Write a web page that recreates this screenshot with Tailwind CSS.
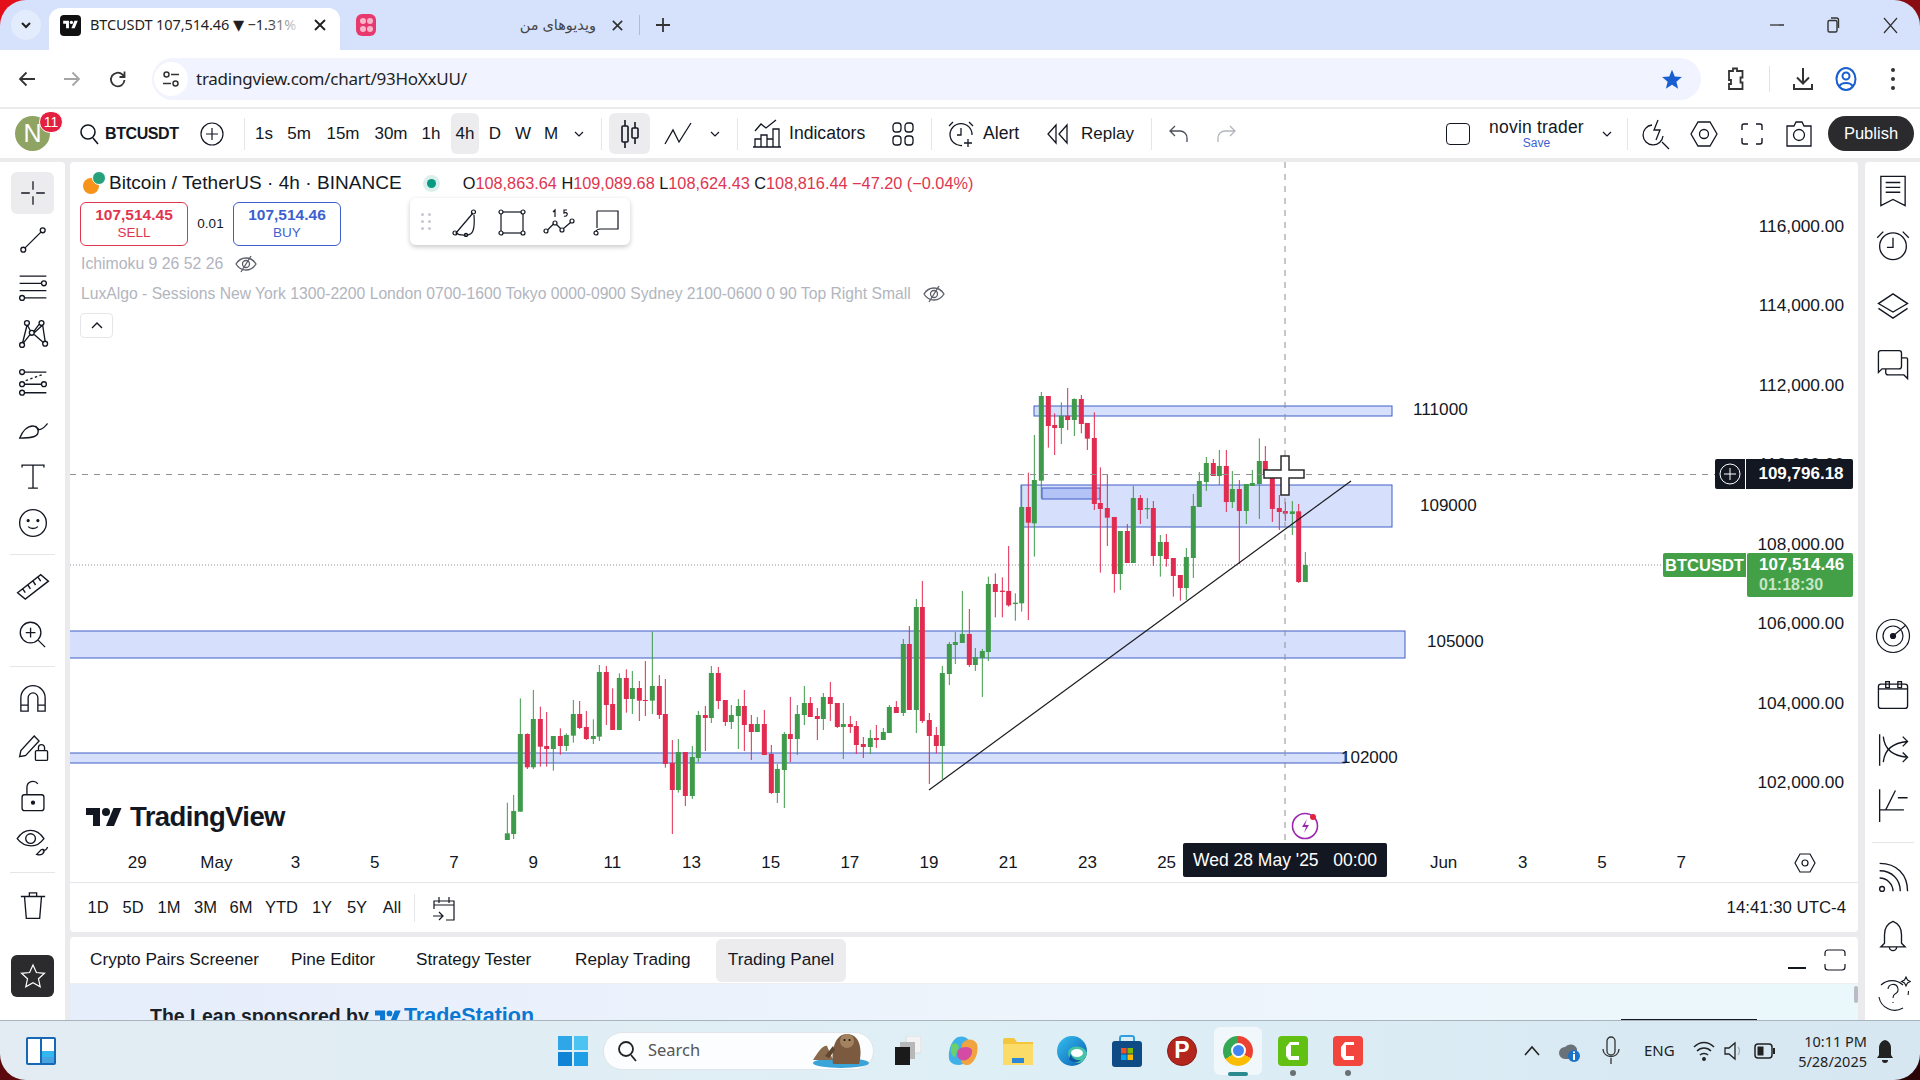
<!DOCTYPE html>
<html lang="en">
<head>
<meta charset="UTF-8">
<title>BTCUSDT 107,514.46 ▼ −1.31%</title>
<script src="https://cdn.jsdelivr.net/npm/@tailwindcss/browser@4"></script>
</head>
<body class="w-[1920px] h-[1080px] overflow-hidden bg-[conic-gradient(#8a0b12_0_25%,#2a0506_25%_50%,#5c0a0e_50%_75%,#e3101c_75%)] font-['Liberation_Sans',sans-serif] text-[#131722]">
<div class="w-full h-full flex flex-col rounded-[26px] overflow-hidden">

  <!-- browser tabs -->
  <div class="h-[50px] shrink-0 bg-[#d6e2fb] flex items-center relative font-['Noto_Sans','DejaVu_Sans',sans-serif] text-[#1f1f1f]">
    <div class="w-[30px] h-[30px] ml-[11px] rounded-full bg-[#e3ecfc] flex items-center justify-center">
      <svg width="14" height="14" viewBox="0 0 14 14" fill="none" stroke="#1f1f1f" stroke-width="2"><path d="M3 5l4 4 4-4"/></svg>
    </div>
    <div class="relative w-[291px] h-[42px] mt-[8px] ml-[8px] rounded-t-[12px] bg-white flex items-center pl-[11px] pb-[8px] overflow-hidden">
      <svg width="21" height="21" viewBox="0 0 21 21"><rect width="21" height="21" rx="4" fill="#111"/><g transform="translate(3.2 4.2) scale(.41)" fill="#fff"><path d="M14 22H7V11H0V4h14v18zM28 22h-8l7.5-18h8L28 22z"/><circle cx="20" cy="8" r="4"/></g></svg>
      <span class="ml-[9px] text-[14.5px] whitespace-nowrap tracking-[-0.1px]">BTCUSDT 107,514.46 ▼ −1.31%</span>
      <div class="absolute left-[215px] top-0 w-[40px] h-full bg-gradient-to-r from-white/0 to-white"></div>
      <div class="absolute left-[253px] top-0 w-[36px] h-full pb-[8px] bg-white flex items-center justify-center">
        <svg width="14" height="14" viewBox="0 0 14 14" stroke="#1f1f1f" stroke-width="1.8"><path d="M2 2l10 10M12 2L2 12"/></svg>
      </div>
    </div>
    <div class="w-[20px] h-[22px] ml-[16px] rounded-[6px] bg-[#e8386d] flex flex-wrap items-center justify-center p-[3px] gap-[1px]">
      <span class="w-[6px] h-[6px] rounded-full bg-[#f7b7cb]"></span><span class="w-[6px] h-[6px] rounded-full bg-[#f7b7cb]"></span><span class="w-[6px] h-[6px] rounded-full bg-[#f7b7cb]"></span><span class="w-[6px] h-[6px] rounded-full bg-[#f7b7cb]"></span>
    </div>
    <span class="ml-[138px] w-[82px] text-[14.5px] whitespace-nowrap text-[#444]" dir="rtl">ویدیوهای من</span>
    <svg class="ml-[15px]" width="13" height="13" viewBox="0 0 14 14" stroke="#333" stroke-width="1.8"><path d="M2 2l10 10M12 2L2 12"/></svg>
    <div class="w-px h-[20px] ml-[15px] bg-[#a9bedf]"></div>
    <svg class="ml-[15px]" width="16" height="16" viewBox="0 0 16 16" stroke="#333" stroke-width="1.8"><path d="M8 1v14M1 8h14"/></svg>
    <svg class="ml-auto" width="14" height="14" viewBox="0 0 14 14" stroke="#333" stroke-width="1.3"><path d="M0 7h14"/></svg>
    <svg class="ml-[42px]" width="14" height="16" viewBox="0 0 14 16" fill="none" stroke="#333" stroke-width="1.4"><rect x="2" y="3.5" width="9" height="11.5" rx="1.5"/><path d="M5 1h5.5A2 2 0 0 1 12.500 3v8"/></svg>
    <svg class="ml-[43px] mr-[22px]" width="15" height="17" viewBox="0 0 15 17" stroke="#333" stroke-width="1.2"><path d="M1 1l13 15M14 1L1 16"/></svg>
  </div>

  <!-- address bar -->
  <div class="h-[57px] shrink-0 bg-white flex items-center font-['Noto_Sans',sans-serif]">
    <svg class="ml-[18px]" width="18" height="18" viewBox="0 0 18 18" fill="none" stroke="#333" stroke-width="1.8"><path d="M17 9H2M8.500 2.500L2 9l6.500 6.500"/></svg>
    <svg class="ml-[27px]" width="18" height="18" viewBox="0 0 18 18" fill="none" stroke="#a5a5a5" stroke-width="1.8"><path d="M1 9h15M9.500 2.500L16 9l-6.500 6.500"/></svg>
    <svg class="ml-[28px]" width="18" height="20" viewBox="0 0 18 20" fill="none" stroke="#333" stroke-width="1.8"><path d="M15.500 11a6.800 6.800 0 1 1-2-5.300L15.500 8M15.500 2.500V8h-5"/></svg>
    <div class="w-[1549px] h-[42px] ml-[25px] rounded-full bg-[#f1f3fe] flex items-center relative">
      <div class="w-[34px] h-[34px] ml-[2px] rounded-full bg-white flex items-center justify-center">
        <svg width="18" height="18" viewBox="0 0 18 18" fill="none" stroke="#333" stroke-width="1.5"><circle cx="4.500" cy="4.500" r="2.500"/><circle cx="13.500" cy="13.500" r="2.500"/><path d="M9 4.500h8M1 13.500h8"/></svg>
      </div>
      <span class="ml-[8px] text-[17px] text-[#1f1f1f] tracking-[-0.25px]">tradingview.com/chart/93HoXxUU/</span>
      <svg class="absolute left-[1509px] top-[10px]" width="22" height="22" viewBox="0 0 24 24" fill="#1a5fd0"><path d="M12 2l3 7.200 7.800.6-6 5.100 1.900 7.600L12 18.400l-6.700 4.100 1.900-7.600-6-5.100 7.800-.6z"/></svg>
    </div>
    <svg class="ml-[25px]" width="20" height="26" viewBox="0 0 20 26" fill="none" stroke="#333" stroke-width="1.8"><path d="M3 5h4V2.500h4V5h5.500v6.500H14.500v5H16.500V23H3v-5h2v-4H3z"/></svg>
    <div class="w-px h-[26px] ml-[23px] bg-[#dfe3ee]"></div>
    <svg class="ml-[22px]" width="22" height="26" viewBox="0 0 22 26" fill="none" stroke="#333" stroke-width="2"><path d="M11 2v15M5 11.500l6 6 6-6M2 18v5h18v-5"/></svg>
    <svg class="ml-[20px]" width="24" height="26" viewBox="0 0 24 26" fill="none" stroke="#1a5fd0" stroke-width="2"><ellipse cx="12" cy="13" rx="9.500" ry="11"/><circle cx="12" cy="10" r="3.500"/><path d="M5.500 20c2-4 11-4 13 0"/></svg>
    <div class="ml-[33px] flex flex-col gap-[5px]">
      <span class="w-[4px] h-[4px] rounded-full bg-[#333]"></span><span class="w-[4px] h-[4px] rounded-full bg-[#333]"></span><span class="w-[4px] h-[4px] rounded-full bg-[#333]"></span>
    </div>
  </div>

  <!-- tradingview -->
  <div class="flex-1 min-h-0 bg-[#ebebee] pt-[2px] flex flex-col">
    <!-- top toolbar -->
    <div class="h-[49px] shrink-0 bg-white flex items-center text-[17px] pl-[15px] pr-[6px]">
      <div class="relative w-[35px] h-[35px] rounded-full bg-[#8fa463] text-white text-[25px] flex items-center justify-center">N
        <span class="absolute left-[24px] top-[-5px] w-[24px] h-[22px] rounded-full bg-[#e3203f] text-[14px] flex items-center justify-center border border-white">11</span>
      </div>
      <svg class="ml-[29px]" width="20" height="22" viewBox="0 0 20 22" fill="none" stroke="#131722" stroke-width="1.6"><circle cx="9" cy="9" r="7"/><path d="M14 15l5 6"/></svg>
      <span class="ml-[6px] w-[74px] font-bold text-[16px] tracking-[-0.4px] whitespace-nowrap">BTCUSDT</span>
      <svg class="ml-[21px]" width="24" height="24" viewBox="0 0 24 24" fill="none" stroke="#131722" stroke-width="1.2"><circle cx="12" cy="12" r="11"/><path d="M12 6v12M6 12h12"/></svg>
      <div class="w-px h-[32px] ml-[20px] bg-[#e6e6ea]"></div>
      <span class="w-[38px] text-center">1s</span>
      <span class="w-[32px] text-center">5m</span>
      <span class="w-[56px] text-center">15m</span>
      <span class="w-[40px] text-center">30m</span>
      <span class="w-[40px] text-center">1h</span>
      <span class="w-[28px] h-[41px] rounded-[6px] bg-[#ececef] flex items-center justify-center">4h</span>
      <span class="w-[32px] text-center">D</span>
      <span class="w-[24px] text-center">W</span>
      <span class="w-[32px] text-center">M</span>
      <div class="w-[24px] flex justify-center"><svg width="12" height="12" viewBox="0 0 12 12" fill="none" stroke="#131722" stroke-width="1.2"><path d="M2 4l4 4 4-4"/></svg></div>
      <div class="w-px h-[32px] ml-[10px] bg-[#e6e6ea]"></div>
      <div class="w-[41px] h-[41px] ml-[7px] rounded-[6px] bg-[#ececef] flex items-center justify-center">
        <svg width="24" height="32" viewBox="0 0 24 32" fill="none" stroke="#131722" stroke-width="1.600"><path d="M7 2v6M7 24v6M17 4v6M17 20v6"/><rect x="4" y="8" width="6" height="16" rx="1"/><rect x="14" y="10" width="6" height="10" rx="1"/></svg>
      </div>
      <svg class="ml-[14px]" width="28" height="24" viewBox="0 0 28 24" fill="none" stroke="#131722" stroke-width="1.300"><path d="M1 22L9 8l6 12L27 1"/></svg>
      <div class="w-[20px] ml-[13px] flex justify-center"><svg width="12" height="12" viewBox="0 0 12 12" fill="none" stroke="#131722" stroke-width="1.2"><path d="M2 4l4 4 4-4"/></svg></div>
      <div class="w-px h-[32px] ml-[12px] bg-[#e6e6ea]"></div>
      <svg class="ml-[14px]" width="30" height="30" viewBox="0 0 30 30" fill="none" stroke="#131722" stroke-width="1.300"><path d="M3 12l6-7 5 4L24 1"/><path d="M3 28v-8h6v8zM9 28V16h6v12M15 28V20h6v8M21 28V10h6v18zM1 28h28"/></svg>
      <span class="ml-[7px] w-[77px] text-[17.600px] whitespace-nowrap">Indicators</span>
      <svg class="ml-[24px]" width="26" height="26" viewBox="0 0 26 26" fill="none" stroke="#131722" stroke-width="1.300"><rect x="3" y="2" width="8" height="9" rx="3"/><rect x="15" y="2" width="8" height="9" rx="3"/><rect x="3" y="15" width="8" height="9" rx="3"/><rect x="15" y="15" width="8" height="9" rx="3"/></svg>
      <div class="w-px h-[32px] ml-[15px] bg-[#e6e6ea]"></div>
      <svg class="ml-[14px]" width="30" height="28" viewBox="0 0 30 28" fill="none" stroke="#131722" stroke-width="1.300"><path d="M16 25.500A11 11 0 1 1 26 15M15 8v7h-4M3 6l4-4M23 2l4 4M22 19v8M18 23h8"/></svg>
      <span class="ml-[7px] w-[39px] text-[17.600px]">Alert</span>
      <svg class="ml-[23px]" width="26" height="24" viewBox="0 0 26 24" fill="none" stroke="#131722" stroke-width="1.300"><path d="M11 3L3 12l8 9zM22 3l-8 9 8 9z"/></svg>
      <span class="ml-[10px] w-[53px]">Replay</span>
      <div class="w-px h-[32px] ml-[17px] bg-[#e6e6ea]"></div>
      <svg class="ml-[15px]" width="24" height="24" viewBox="0 0 24 24" fill="none" stroke="#4a4e59" stroke-width="1.300"><path d="M8 4L3 9l5 5M3 9h10a7 7 0 0 1 7 7v4"/></svg>
      <svg class="ml-[23px]" width="24" height="24" viewBox="0 0 24 24" fill="none" stroke="#b2b5be" stroke-width="1.300"><path d="M16 4l5 5-5 5M21 9H11a7 7 0 0 0-7 7v4"/></svg>

      <div class="ml-auto w-[24px] h-[22px] rounded-[4px] border-[1.5px] border-[#131722]"></div>
      <div class="ml-[18px] w-[97px] flex flex-col items-center leading-none">
        <span class="text-[17.500px] tracking-[0.2px] whitespace-nowrap leading-[19px]">novin trader</span>
        <span class="text-[12px] text-[#3d5fd0] leading-[13px]">Save</span>
      </div>
      <div class="w-[20px] ml-[12px] flex justify-center"><svg width="12" height="12" viewBox="0 0 12 12" fill="none" stroke="#131722" stroke-width="1.2"><path d="M2 4l4 4 4-4"/></svg></div>
      <div class="w-px h-[32px] ml-[10px] bg-[#e6e6ea]"></div>
      <svg class="ml-[13px]" width="30" height="32" viewBox="0 0 30 32" fill="none" stroke="#131722" stroke-width="1.300"><path d="M11 7a10 10 0 1 0 11 11M21 24l7 7M17 2l-4 10h6l-4 10"/></svg>
      <svg class="ml-[18px]" width="30" height="30" viewBox="0 0 30 30" fill="none" stroke="#131722" stroke-width="1.300"><path d="M9 3h12l7 12-7 12H9L2 15z"/><circle cx="15" cy="15" r="4.500"/></svg>
      <svg class="ml-[20px]" width="26" height="26" viewBox="0 0 26 26" fill="none" stroke="#131722" stroke-width="1.400"><path d="M3 9V5a2 2 0 0 1 2-2h4M17 3h4a2 2 0 0 1 2 2v4M23 17v4a2 2 0 0 1-2 2h-4M9 23H5a2 2 0 0 1-2-2v-4"/></svg>
      <svg class="ml-[19px]" width="30" height="28" viewBox="0 0 30 28" fill="none" stroke="#131722" stroke-width="1.300"><path d="M3 6h7l2-4h6l2 4h7v20H3z"/><circle cx="15" cy="15" r="5.500"/></svg>
      <div class="ml-[14px] w-[86px] h-[35px] rounded-full bg-[#2b2b2d] text-white text-[16.500px] flex items-center justify-center">Publish</div>
    </div>

    <div class="flex-1 min-h-0 flex pt-[4px]">
      <!-- left toolbar -->
      <div class="w-[65px] shrink-0 bg-white flex flex-col items-center pt-[10px] rounded-tr-[4px]">
        <div class="w-[43px] h-[42px] rounded-[6px] bg-[#ececef] flex items-center justify-center">
          <svg width="30" height="30" viewBox="0 0 28 28" stroke="#131722" stroke-width="1.200"><path d="M14 3v8M14 17v8M3 14h8M17 14h8"/></svg>
        </div>
        <svg class="mt-[9px]" width="34" height="34" viewBox="0 0 28 28" fill="none" stroke="#131722" stroke-width="1.100"><circle cx="6" cy="22" r="2"/><circle cx="22" cy="6" r="2"/><path d="M7.500 20.500l13-13"/></svg>
        <svg class="mt-[13px]" width="34" height="34" viewBox="0 0 28 28" fill="none" stroke="#131722" stroke-width="1.100"><path d="M3 5h22M3 11h18M3 17h22M7 23h18"/><circle cx="23" cy="11" r="2"/><circle cx="5" cy="23" r="2"/></svg>
        <svg class="mt-[13px]" width="34" height="34" viewBox="0 0 28 28" fill="none" stroke="#131722" stroke-width="1.100"><circle cx="9" cy="5" r="2"/><circle cx="21" cy="5" r="2"/><circle cx="13" cy="13" r="2"/><circle cx="5" cy="23" r="2"/><circle cx="24" cy="22" r="2"/><path d="M9.500 7l2.500 4.500M19 6l-4.500 6M15 13l7-6.500M22 7l2 13M11.500 14.500L6 21.500M9 7L5.500 21M15 14.500l7.500 6.500"/></svg>
        <svg class="mt-[15px]" width="34" height="34" viewBox="0 0 28 28" fill="none" stroke="#131722" stroke-width="1.100"><circle cx="5" cy="5" r="2"/><circle cx="5" cy="15" r="2"/><circle cx="5" cy="22" r="2"/><circle cx="23" cy="15" r="2"/><path d="M7 5h18M7 15h14M7 22h18"/><path d="M8 12l14-5" stroke-dasharray="2 2"/></svg>
        <svg class="mt-[9px]" width="34" height="34" viewBox="0 0 28 28" fill="none" stroke="#131722" stroke-width="1.100"><path d="M3 24c2-5 6-10 11-10 3 0 5 3 4 6-1 3-5 4-15 4zM16 14l3 3c3 0 5-3 7-5"/></svg>
        <svg class="mt-[16px]" width="34" height="34" viewBox="0 0 28 28" fill="none" stroke="#131722" stroke-width="1.100"><path d="M5 7V5h18v2M14 5v19M10 24h8"/></svg>
        <svg class="mt-[13px]" width="34" height="34" viewBox="0 0 28 28" fill="none" stroke="#131722" stroke-width="1.100"><circle cx="14" cy="14" r="11"/><circle cx="10" cy="12" r=".8" fill="#131722"/><circle cx="18" cy="12" r=".8" fill="#131722"/><path d="M10 17c2 2 6 2 8 0"/></svg>
        <div class="w-[45px] h-px mt-[14px] bg-[#e6e6ea]"></div>
        <svg class="mt-[12px]" width="36" height="36" viewBox="0 0 28 28" fill="none" stroke="#131722" stroke-width="1.100"><path d="M2 20L20 6l6 5L8 25zM6 17l2 3M10 14l2 3M14 11l2 3M18 8l2 3"/></svg>
        <svg class="mt-[15px]" width="34" height="34" viewBox="0 0 28 28" fill="none" stroke="#131722" stroke-width="1.100"><circle cx="12" cy="12" r="8.500"/><path d="M12 8v8M8 12h8M18 18l6 6"/></svg>
        <div class="w-[45px] h-px mt-[14px] bg-[#e6e6ea]"></div>
        <svg class="mt-[15px]" width="34" height="34" viewBox="0 0 28 28" fill="none" stroke="#131722" stroke-width="1.100"><path d="M4 24V13a10 10 0 0 1 20 0v11h-6V13a4 4 0 0 0-8 0v11zM4 19h6M18 19h6"/></svg>
        <svg class="mt-[14px]" width="34" height="34" viewBox="0 0 28 28" fill="none" stroke="#131722" stroke-width="1.100"><path d="M3 22l1-5L15 5l4 4L8 21zM3 22l5-1"/><rect x="16" y="17" width="10" height="8" rx="1"/><path d="M18.500 17v-2.500a2.500 2.500 0 0 1 5 0V17"/></svg>
        <svg class="mt-[15px]" width="34" height="34" viewBox="0 0 28 28" fill="none" stroke="#131722" stroke-width="1.100"><rect x="5" y="13" width="18" height="13" rx="2"/><path d="M9 13V7a5 5 0 0 1 9-3"/><circle cx="14" cy="19.500" r="1.200" fill="#131722"/></svg>
        <svg class="mt-[11px]" width="34" height="34" viewBox="0 0 28 28" fill="none" stroke="#131722" stroke-width="1.100"><path d="M1 12c6-9 16-9 22 0-3 4-6 6-10 6-5 0-9-2-12-6z"/><circle cx="12" cy="12" r="4"/><path d="M17 25c3 1 5 0 6-2 1-2-2-3-3-1zM22 22c1 0 3 0 4-3"/></svg>
        <div class="w-[45px] h-px mt-[14px] bg-[#e6e6ea]"></div>
        <svg class="mt-[15px]" width="34" height="34" viewBox="0 0 28 28" fill="none" stroke="#131722" stroke-width="1.100"><path d="M4 7h20M7 7l1.500 18h11L21 7M11 7V4h6v3"/></svg>
        <div class="w-[43px] h-[42px] mt-[33px] rounded-[6px] bg-[#2b2b2d] flex items-center justify-center">
          <svg width="28" height="28" viewBox="0 0 28 28" fill="none" stroke="#fff" stroke-width="1.200"><path d="M14 3l3.400 7.500 8.100.8-6 5.500 1.700 8-7.200-4.100-7.200 4.100 1.700-8-6-5.500 8.100-.8z"/></svg>
        </div>
      </div>

      <!-- centre column -->
      <div class="w-[1788px] ml-[5px] shrink-0 flex flex-col">
        <div class="h-[721px] shrink-0 bg-white rounded-t-[4px] flex flex-col relative border-b border-[#e6e6ea]">
          <div class="flex-1 relative">
            <svg id="plot" class="absolute inset-0" width="1788" height="678" viewBox="70 162 1788 678">
              <rect x="1034" y="406" width="358" height="10" fill="#d6dffb" stroke="#3f5ec8"/>
              <rect x="1021" y="485" width="371" height="42" fill="#d6dffb" stroke="#3f5ec8"/>
              <rect x="1042" y="488" width="58" height="11" fill="#b4c3f5" stroke="#3f5ec8"/>
              <rect x="60" y="631" width="1345" height="27" fill="#d6dffb" stroke="#3f5ec8"/>
              <rect x="60" y="753" width="1285" height="10" fill="#d6dffb" stroke="#3f5ec8"/>
              <path d="M70 565H1663" stroke="#8a8e99" stroke-dasharray="1 2"/>
              <g id="candles"></g>
              <path d="M929 790L1351 481" stroke="#1b1b20" stroke-width="1.200"/>
              <path d="M70 474.500H1715M1285 162V840" stroke="#8f8f94" stroke-dasharray="6 6"/>
              <g transform="translate(1305 826)">
                <circle r="12.500" fill="#fff" stroke="#9c27b0" stroke-width="1.600"/>
                <path d="M2-7l-5 8h4l-2 6 5-8H0z" fill="#9c27b0"/>
                <circle cx="8" cy="-9" r="3" fill="#e3203f"/>
              </g>
              <path d="M1281 456h8v14h15v8h-15v17h-8v-17h-17v-8h17z" fill="#fff" stroke="#2a2a2a" stroke-width="1.500"/>
            </svg>

            <!-- legend -->
            <div class="absolute left-[12px] top-[8px] flex items-center h-[26px]">
              <svg width="24" height="24" viewBox="0 0 24 24"><circle cx="9" cy="15" r="8" fill="#f7931a"/><circle cx="17" cy="7" r="6.500" fill="#26a17b" stroke="#fff"/></svg>
              <span class="ml-[3px] text-[19px] whitespace-nowrap tracking-[0.05px]">Bitcoin / TetherUS · 4h · BINANCE</span>
              <span class="ml-[25px] w-[9px] h-[9px] rounded-full bg-[#089981] ring-[4px] ring-[#089981]/15"></span>
              <span class="ml-[27px] text-[16.300px] text-[#e0354f] whitespace-nowrap"><b class="font-normal text-[#131722]">O</b>108,863.64 <b class="font-normal text-[#131722]">H</b>109,089.68 <b class="font-normal text-[#131722]">L</b>108,624.43 <b class="font-normal text-[#131722]">C</b>108,816.44 −47.20 (−0.04%)</span>
            </div>
            <div class="absolute left-[10px] top-[40px] flex items-center">
              <div class="w-[108px] h-[44px] rounded-[6px] border border-[#e0354f] text-[#e0354f] flex flex-col items-center justify-center leading-[18px]">
                <span class="text-[15.500px] font-bold">107,514.45</span><span class="text-[13.500px]">SELL</span>
              </div>
              <span class="w-[45px] text-center text-[13.500px]">0.01</span>
              <div class="w-[108px] h-[44px] rounded-[6px] border border-[#3d5fd0] text-[#3d5fd0] flex flex-col items-center justify-center leading-[18px]">
                <span class="text-[15.500px] font-bold">107,514.46</span><span class="text-[13.500px]">BUY</span>
              </div>
            </div>
            <div class="absolute left-[340px] top-[36px] w-[220px] h-[47px] rounded-[6px] bg-white shadow-[0_2px_5px_rgba(0,0,0,0.22)] flex items-center">
              <div class="ml-[11px] grid grid-cols-2 gap-x-[4px] gap-y-[4px]">
                <span class="w-[3px] h-[3px] rounded-full bg-[#c6c8d0]"></span><span class="w-[3px] h-[3px] rounded-full bg-[#c6c8d0]"></span><span class="w-[3px] h-[3px] rounded-full bg-[#c6c8d0]"></span><span class="w-[3px] h-[3px] rounded-full bg-[#c6c8d0]"></span><span class="w-[3px] h-[3px] rounded-full bg-[#c6c8d0]"></span><span class="w-[3px] h-[3px] rounded-full bg-[#c6c8d0]"></span>
              </div>
              <svg class="ml-[20px]" width="30" height="30" viewBox="0 0 30 30" fill="none" stroke="#131722" stroke-width="1.200"><path d="M22 6L5 26c4 3 8 2 11 2 6 0 8-6 7-20"/><circle cx="22.500" cy="5" r="2"/><circle cx="4" cy="26" r="2"/><circle cx="15" cy="28" r="1.600"/></svg>
              <svg class="ml-[16px]" width="30" height="30" viewBox="0 0 30 30" fill="none" stroke="#131722" stroke-width="1.200"><rect x="4" y="5" width="22" height="21"/><circle cx="4" cy="5" r="2" fill="#fff"/><circle cx="26" cy="5" r="2" fill="#fff"/><circle cx="4" cy="26" r="2" fill="#fff"/><circle cx="26" cy="26" r="2" fill="#fff"/></svg>
              <svg class="ml-[16px]" width="32" height="32" viewBox="0 0 32 32" fill="none" stroke="#131722" stroke-width="1.200"><circle cx="3" cy="25" r="2"/><circle cx="12" cy="17" r="2"/><circle cx="19" cy="24" r="2"/><circle cx="29" cy="15" r="2"/><path d="M4.500 24L10.500 18M13.500 18.500L17.500 22.500M20.500 22.500L27.500 16.500"/><path d="M10 6l2-2v7M24 4h-3v3c2-1 4 0 3 2s-3 1-3 1"/></svg>
              <svg class="ml-[16px]" width="30" height="30" viewBox="0 0 30 30" fill="none" stroke="#131722" stroke-width="1.200"><path d="M6 4h21v18H10c-3 0-5 1-5 3"/><path d="M6 4v17"/><circle cx="5" cy="26" r="2"/></svg>
            </div>
            <div class="absolute left-[11px] top-[90px] flex items-center text-[15.800px] text-[#b2b5be] whitespace-nowrap">
              Ichimoku 9 26 52 26
              <svg class="ml-[12px]" width="22" height="22" viewBox="0 0 22 22" fill="none" stroke="#5a5e69" stroke-width="1.300"><path d="M1 11c5-8 15-8 20 0-5 8-15 8-20 0zM16 3L6 19"/><circle cx="11" cy="11" r="3.500"/></svg>
            </div>
            <div class="absolute left-[11px] top-[120px] flex items-center text-[15.700px] text-[#b2b5be] whitespace-nowrap">
              LuxAlgo - Sessions New York 1300-2200 London 0700-1600 Tokyo 0000-0900 Sydney 2100-0600 0 90 Top Right Small
              <svg class="ml-[12px]" width="22" height="22" viewBox="0 0 22 22" fill="none" stroke="#5a5e69" stroke-width="1.300"><path d="M1 11c5-8 15-8 20 0-5 8-15 8-20 0zM16 3L6 19"/><circle cx="11" cy="11" r="3.500"/></svg>
            </div>
            <div class="absolute left-[10px] top-[151px] w-[33px] h-[25px] rounded-[4px] border border-[#e6e6ea] bg-white flex items-center justify-center">
              <svg width="14" height="10" viewBox="0 0 14 10" fill="none" stroke="#131722" stroke-width="1.400"><path d="M2 7l5-5 5 5"/></svg>
            </div>

            <!-- zone labels -->
            <span class="absolute left-[1343px] top-[237px] text-[17.200px] leading-[20px]">111000</span>
            <span class="absolute left-[1350px] top-[334px] text-[17px] leading-[20px]">109000</span>
            <span class="absolute left-[1357px] top-[470px] text-[17px] leading-[20px]">105000</span>
            <span class="absolute left-[1271px] top-[586px] text-[17px] leading-[20px]">102000</span>

            <!-- watermark logo -->
            <div class="absolute left-[15px] top-[640px] flex items-center h-[30px]">
              <svg width="38" height="26" viewBox="0 0 36 26"><g fill="#131722"><path d="M14 22H7V11H0V4h14v18zM28 22h-8l7.500-18h8L28 22z"/><circle cx="20" cy="8" r="4"/></g></svg>
              <span class="ml-[7px] text-[27.500px] font-bold tracking-[-0.6px] leading-none">TradingView</span>
            </div>

            <!-- price scale -->
            <div class="absolute right-[14px] top-[25px] flex flex-col text-[17.300px]">
              <span class="h-[79.500px] flex items-center justify-end">116,000.00</span>
              <span class="h-[79.500px] flex items-center justify-end">114,000.00</span>
              <span class="h-[79.500px] flex items-center justify-end">112,000.00</span>
              <span class="h-[79.500px] flex items-center justify-end">110,000.00</span>
              <span class="h-[79.500px] flex items-center justify-end">108,000.00</span>
              <span class="h-[79.500px] flex items-center justify-end">106,000.00</span>
              <span class="h-[79.500px] flex items-center justify-end">104,000.00</span>
              <span class="h-[79.500px] flex items-center justify-end">102,000.00</span>
            </div>
            <div class="absolute left-[1645px] top-[297px] w-[138px] h-[30px] flex rounded-[2px] overflow-hidden text-white bg-[#131722]">
              <div class="w-[31px] flex items-center justify-center border-r border-white">
                <svg width="22" height="22" viewBox="0 0 22 22" fill="none" stroke="#fff" stroke-width="1"><circle cx="11" cy="11" r="10"/><path d="M11 5v12M5 11h12"/></svg>
              </div>
              <span class="flex-1 flex items-center justify-center pl-[3px] font-bold text-[17px]">109,796.18</span>
            </div>
            <div class="absolute left-[1593px] top-[391px] w-[83px] h-[24px] rounded-l-[2px] bg-[#43a047] text-white font-bold text-[16.500px] flex items-center justify-center">BTCUSDT</div>
            <div class="absolute left-[1677px] top-[391px] w-[106px] h-[44px] rounded-[2px] bg-[#43a047] text-white flex flex-col justify-center pl-[12px] leading-[20px]">
              <span class="font-bold text-[17px]">107,514.46</span>
              <span class="text-[16px] font-bold text-[#c5e6c7]">01:18:30</span>
            </div>
          </div>

          <!-- time scale -->
          <div class="h-[42px] shrink-0 flex items-center pl-[27.600px] pt-[4px] text-[17px]">
            <span class="w-[79.200px] text-center">29</span>
            <span class="w-[79.200px] text-center">May</span>
            <span class="w-[79.200px] text-center">3</span>
            <span class="w-[79.200px] text-center">5</span>
            <span class="w-[79.200px] text-center">7</span>
            <span class="w-[79.200px] text-center">9</span>
            <span class="w-[79.200px] text-center">11</span>
            <span class="w-[79.200px] text-center">13</span>
            <span class="w-[79.200px] text-center">15</span>
            <span class="w-[79.200px] text-center">17</span>
            <span class="w-[79.200px] text-center">19</span>
            <span class="w-[79.200px] text-center">21</span>
            <span class="w-[79.200px] text-center">23</span>
            <span class="w-[79.200px] text-center">25</span>
            <span class="w-[79.200px] ml-[197.800px] text-center">Jun</span>
            <span class="w-[79.200px] text-center">3</span>
            <span class="w-[79.200px] text-center">5</span>
            <span class="w-[79.200px] text-center">7</span>
            <svg class="ml-[73px]" width="22" height="24" viewBox="0 0 22 24" fill="none" stroke="#131722" stroke-width="1.200"><path d="M6 3h10l5 9-5 9H6l-5-9z"/><circle cx="11" cy="12" r="3"/></svg>
          </div>
          <div class="absolute left-[1113px] top-[681px] w-[204px] h-[34px] rounded-[2px] bg-[#131722] text-white text-[17.500px] flex items-center justify-center whitespace-pre">Wed 28 May '25   00:00</div>
        </div>

        <!-- range bar -->
        <div class="h-[49px] shrink-0 bg-white rounded-b-[4px] flex items-center text-[16.500px]">
          <span class="w-[46px] ml-[5px] text-center">1D</span>
          <span class="w-[34px] ml-[-5px] text-center">5D</span>
          <span class="w-[38px] text-center">1M</span>
          <span class="w-[35px] text-center">3M</span>
          <span class="w-[36px] text-center">6M</span>
          <span class="w-[45px] text-center">YTD</span>
          <span class="w-[36px] text-center">1Y</span>
          <span class="w-[34px] text-center">5Y</span>
          <span class="w-[36px] text-center">All</span>
          <div class="w-px h-[28px] ml-[4px] bg-[#e6e6ea]"></div>
          <svg class="ml-[15px]" width="28" height="28" viewBox="0 0 28 28" fill="none" stroke="#131722" stroke-width="1.200"><path d="M4 15V7h20v19h-8M4 11h20M9 3v6M19 3v6M3 22h9M9 18l4 4-4 4"/></svg>
          <span class="ml-auto mr-[12px] text-[16.800px]">14:41:30 UTC-4</span>
        </div>

        <!-- bottom panel -->
        <div class="flex-1 min-h-0 mt-[5px] rounded-t-[4px] overflow-hidden bg-white flex flex-col">
          <div class="h-[47px] shrink-0 flex items-center text-[17.200px] border-b border-[#eeeef1]">
            <span class="ml-[20px] w-[168px] whitespace-nowrap">Crypto Pairs Screener</span>
            <span class="ml-[33px] w-[85px] whitespace-nowrap">Pine Editor</span>
            <span class="ml-[40px] w-[119px] whitespace-nowrap">Strategy Tester</span>
            <span class="ml-[40px] w-[114px] whitespace-nowrap">Replay Trading</span>
            <span class="ml-[27px] w-[130px] h-[43px] rounded-[6px] bg-[#ececef] flex items-center justify-center whitespace-nowrap">Trading Panel</span>
            <div class="ml-auto w-[18px] h-[2px] mt-[16px] bg-[#131722]"></div>
            <svg class="ml-[18px] mr-[12px]" width="22" height="22" viewBox="0 0 22 22" fill="none" stroke="#131722" stroke-width="1.200"><path d="M1 7V4a3 3 0 0 1 3-3h14a3 3 0 0 1 3 3v3M1 15v3a3 3 0 0 0 3 3h14a3 3 0 0 0 3-3v-3"/></svg>
          </div>
          <div class="flex-1 min-h-0 relative overflow-hidden bg-gradient-to-r from-[#e6edfb] via-[#eef4fc] to-[#ebf8fb] flex items-start pt-[19px] pl-[80px]">
            <span class="text-[19.500px] leading-[26px] whitespace-nowrap font-bold text-[#1b1f2a]">The Leap sponsored by</span>
            <svg class="ml-[6px] mt-[3px]" width="26" height="22" viewBox="0 0 36 26"><g fill="#0a78d2"><path d="M14 22H7V11H0V4h14v18zM28 22h-8l7.500-18h8L28 22z"/><circle cx="20" cy="8" r="4"/></g></svg>
            <span class="ml-[3px] text-[21.500px] leading-[26px] whitespace-nowrap font-bold text-[#0a78d2]">TradeStation</span>
            <div class="absolute right-[101px] bottom-0 w-[136px] h-[1px] bg-[#131722]"></div>
            <div class="absolute right-0 top-[2px] w-[4px] h-[17px] rounded-full bg-[#b9bcc4]"></div>
          </div>
        </div>
      </div>

      <!-- right toolbar -->
      <div class="w-[55px] ml-[7px] shrink-0 bg-white flex flex-col items-center pt-[12px] rounded-tl-[4px]">
        <svg width="34" height="34" viewBox="0 0 28 28" fill="none" stroke="#131722" stroke-width="1.100"><path d="M4 2h20v24l-10-5-10 5zM8 7h12M8 11h12M8 15h12"/></svg>
        <svg class="mt-[20px]" width="34" height="34" viewBox="0 0 28 28" fill="none" stroke="#131722" stroke-width="1.100"><circle cx="14" cy="15" r="11"/><path d="M14 8v8h-5M1 8l5-5M27 8l-5-5"/></svg>
        <svg class="mt-[27px]" width="34" height="34" viewBox="0 0 28 28" fill="none" stroke="#131722" stroke-width="1.100"><path d="M14 4l12 8-12 7-12-7zM2 16l12 8 12-8"/></svg>
        <svg class="mt-[24px]" width="34" height="34" viewBox="0 0 28 28" fill="none" stroke="#131722" stroke-width="1.100"><path d="M2 21V5a2 2 0 0 1 2-2h15a2 2 0 0 1 2 2v11a2 2 0 0 1-2 2H5zM21 9h4a1 1 0 0 1 1 1v16l-3-3H10a2 2 0 0 1-2-2v-3"/></svg>
        <svg class="mt-[237px]" width="36" height="36" viewBox="0 0 36 36" fill="none" stroke="#131722" stroke-width="1.200"><circle cx="18" cy="18" r="16.500"/><circle cx="18" cy="18" r="10"/><circle cx="18" cy="18" r="2.500" fill="#131722"/><path d="M18 18L31 7"/></svg>
        <svg class="mt-[24px]" width="34" height="34" viewBox="0 0 28 28" fill="none" stroke="#131722" stroke-width="1.100"><rect x="2" y="5" width="24" height="20" rx="2"/><path d="M2 9h24"/><rect x="8" y="3" width="3" height="5"/><rect x="18" y="3" width="3" height="5"/></svg>
        <svg class="mt-[21px]" width="34" height="34" viewBox="0 0 28 28" fill="none" stroke="#131722" stroke-width="1.100"><path d="M3 1v26M6 3c1 10 8 16 20 17M6 24c1-10 8-16 20-17M22 3l4 4-4 4M22 16l4 4-4 4"/></svg>
        <svg class="mt-[21px]" width="34" height="34" viewBox="0 0 28 28" fill="none" stroke="#131722" stroke-width="1.100"><path d="M3 1v27M3 18h5l8-16M3 18h20M18 8h8"/></svg>
        <div class="w-[42px] h-px mt-[20px] bg-[#e6e6ea]"></div>
        <svg class="mt-[18px]" width="34" height="34" viewBox="0 0 28 28" fill="none" stroke="#131722" stroke-width="1.100"><circle cx="5" cy="23" r="2"/><path d="M3 14c6 0 11 5 11 11M3 8c10 0 17 7 17 17M3 2c14 0 23 9 23 23"/></svg>
        <svg class="mt-[24px]" width="34" height="34" viewBox="0 0 28 28" fill="none" stroke="#131722" stroke-width="1.100"><path d="M14 2c-5 2-7 6-7 11v7l-3 3h20l-3-3v-7c0-5-2-9-7-11zM11 23a3 3 0 0 0 6 0"/></svg>
        <svg class="mt-[22px]" width="36" height="36" viewBox="0 0 36 36" fill="none" stroke="#131722" stroke-width="1.100"><path d="M28 10a16 16 0 0 0-22 0M4 22a16 16 0 0 0 24 11M33 20a16 16 0 0 0 .5-4"/><path d="M13 14a5 5 0 1 1 7 5c-2 1-2 2-2 4M18 27v1"/><path d="M31 2l1.500 3 3 1.500-3 1.500L31 11l-1.500-3L26.500 6.500l3-1.500z"/></svg>
      </div>
    </div>
  </div>

  <!-- windows taskbar -->
  <div class="h-[60px] shrink-0 bg-gradient-to-r from-[#e2ecf2] via-[#dfeff6] to-[#d6e7f2] border-t border-[#a9b4bd] flex items-center relative font-['Noto_Sans',sans-serif]">
    <svg class="ml-[26px]" width="30" height="28" viewBox="0 0 30 28"><rect width="30" height="28" rx="2" fill="#1668b5"/><rect x="2" y="2" width="12" height="24" fill="#fff"/><rect x="16" y="2" width="12" height="12" fill="#fff"/><rect x="16" y="14" width="12" height="6" fill="#34b7ee"/><rect x="16" y="20" width="12" height="6" fill="#46a3e0"/></svg>
    <svg class="ml-[502px]" width="30" height="30" viewBox="0 0 30 30"><rect width="14" height="14" fill="#2fa6e8"/><rect x="16" width="14" height="14" fill="#4cc4f2"/><rect y="16" width="14" height="14" fill="#0f84d6"/><rect x="16" y="16" width="14" height="14" fill="#1f9fe6"/></svg>
    <div class="w-[271px] h-[38px] ml-[15px] rounded-full bg-white/90 border border-[#dfe5ea] flex items-center relative text-[16.500px] text-[#555]">
      <svg class="ml-[13px]" width="20" height="22" viewBox="0 0 20 22" fill="none" stroke="#222" stroke-width="1.800"><circle cx="9" cy="9" r="7"/><path d="M14 15l5 6"/></svg>
      <span class="ml-[11px]">Search</span>
      <svg class="absolute right-[4px] bottom-[1px]" width="60" height="38" viewBox="0 0 60 38"><ellipse cx="32" cy="33" rx="28" ry="5" fill="#3aa3d8"/><path d="M4 30c4-6 10-16 14-14l6 14z" fill="#8a6a4d"/><path d="M24 34c-2-14 2-30 14-30s16 14 12 30z" fill="#7b5a3f"/><circle cx="38" cy="11" r="7" fill="#a3825f"/><circle cx="35.500" cy="10" r="1" fill="#111"/><circle cx="40.500" cy="10" r="1" fill="#111"/><path d="M16 26l8-10 2 4-6 8z" fill="#5e4630"/></svg>
    </div>
    <svg class="ml-[21px]" width="26" height="30" viewBox="0 0 26 30"><rect x="11" y="0" width="15" height="17" fill="#f3f3f3" stroke="#dcdcdc"/><rect x="5" y="6" width="15" height="17" fill="#b8b8b8"/><rect x="0" y="11" width="15" height="18" fill="#1a1a1a"/></svg>
    <svg class="ml-[27px]" width="30" height="30" viewBox="0 0 30 30"><path d="M10 1c6-2 11 1 12 7l-7 20c-5 2-12 1-14-5C0 15 3 4 10 1z" fill="#3fb1e8"/><path d="M14 8c4-6 12-6 15 0 2 8-2 19-9 21-5 0-7-2-7-6z" fill="#f0a33f"/><path d="M10 14c4-4 12-4 14 0 1 6-5 12-11 10-4-2-5-6-3-10z" fill="#d34ba3"/><path d="M4 8c3-2 6 0 7 3l-4 10c-3 0-6-8-3-13z" fill="#6bd06b"/></svg>
    <svg class="ml-[25px]" width="30" height="28" viewBox="0 0 30 28"><path d="M0 3a2 2 0 0 1 2-2h9l3 4h16v23H0z" fill="#f3c63d"/><rect y="7" width="30" height="21" rx="1" fill="#fcdc68"/><rect x="9" y="21" width="12" height="5" fill="#2b88d8"/></svg>
    <svg class="ml-[24px]" width="30" height="30" viewBox="0 0 30 30"><defs><linearGradient id="edge" x1="0" y1="0" x2="1" y2="1"><stop offset="0" stop-color="#35c1f1"/><stop offset="1" stop-color="#0a5bb0"/></linearGradient></defs><circle cx="15" cy="15" r="15" fill="url(#edge)"/><path d="M30 17c-2-7-14-9-18-3-3 5 2 13 10 13 4-1 7-5 8-10z" fill="#49c3a5"/><ellipse cx="20" cy="17" rx="6" ry="4" fill="#fff"/><path d="M14 17c0 5 5 8 10 7-3 3-9 3-12-1z" fill="#0c59a4"/></svg>
    <svg class="ml-[25px]" width="30" height="32" viewBox="0 0 30 32"><path d="M8 7V3a2 2 0 0 1 2-2h10a2 2 0 0 1 2 2v4" fill="none" stroke="#2f9fe0" stroke-width="2"/><rect y="6" width="30" height="26" rx="3" fill="#0f4c86"/><rect x="9" y="13" width="5.500" height="5.500" fill="#f25022"/><rect x="15.500" y="13" width="5.500" height="5.500" fill="#7fba00"/><rect x="9" y="19.500" width="5.500" height="5.500" fill="#00a4ef"/><rect x="15.500" y="19.500" width="5.500" height="5.500" fill="#ffb900"/></svg>
    <div class="ml-[25px] w-[30px] h-[30px] rounded-full bg-[#b3261e] border border-[#8a1a15] text-white text-[23px] font-bold font-['Liberation_Sans',sans-serif] flex items-center justify-center">P</div>
    <div class="relative w-[48px] h-[48px] ml-[17px] rounded-[6px] bg-white/60 flex items-center justify-center">
      <div class="w-[30px] h-[30px] rounded-full bg-[conic-gradient(#ea4335_0_33%,#fbbc04_33%_66%,#34a853_66%)] flex items-center justify-center">
        <div class="w-[15px] h-[15px] rounded-full bg-[#4285f4] border-2 border-white"></div>
      </div>
      <div class="absolute bottom-[-1px] left-[14px] w-[20px] h-[4px] rounded-full bg-[#2a8a8f]"></div>
    </div>
    <div class="relative ml-[16px]">
      <svg width="30" height="30" viewBox="0 0 30 30"><rect width="30" height="30" rx="4" fill="#62c012"/><path d="M21 6h-9l-4 5v9l3 4h10v-4h-8v-11h8z" fill="#fff"/></svg>
      <span class="absolute left-[12px] top-[34px] w-[6px] h-[6px] rounded-full bg-[#6a6f74]"></span>
    </div>
    <div class="relative ml-[25px]">
      <svg width="30" height="30" viewBox="0 0 30 30"><rect width="30" height="30" rx="4" fill="#f2453d"/><path d="M21 6h-9l-4 5v9l3 4h10v-4h-8v-11h8z" fill="#fff"/></svg>
      <span class="absolute left-[12px] top-[34px] w-[6px] h-[6px] rounded-full bg-[#6a6f74]"></span>
    </div>
    <svg class="ml-[160px]" width="18" height="14" viewBox="0 0 18 14" fill="none" stroke="#222" stroke-width="1.600"><path d="M2 11l7-8 7 8"/></svg>
    <svg class="ml-[18px]" width="22" height="24" viewBox="0 0 22 24"><path d="M6 20a6 6 0 0 1 0-12 7 7 0 0 1 12 2v10z" fill="#6a7178"/><circle cx="15" cy="17" r="6" fill="#1a73c9"/><rect x="14" y="15" width="2" height="6" fill="#fff"/><rect x="14" y="12.500" width="2" height="1.500" fill="#fff"/></svg>
    <svg class="ml-[21px]" width="18" height="30" viewBox="0 0 18 30" fill="none" stroke="#333" stroke-width="1.300"><rect x="5" y="1" width="8" height="18" rx="4"/><path d="M1 13c0 10 16 10 16 0M9 22v6"/></svg>
    <span class="ml-[24px] text-[15px] text-[#222] w-[30px]">ENG</span>
    <svg class="ml-[18px]" width="24" height="24" viewBox="0 0 24 24" fill="none" stroke="#222" stroke-width="1.500"><path d="M2 8c6-6 14-6 20 0M5 12c4-4 10-4 14 0M8 16c2-2 6-2 8 0"/><circle cx="12" cy="20" r="1.200" fill="#222"/></svg>
    <svg class="ml-[7px]" width="22" height="24" viewBox="0 0 22 24" fill="none" stroke="#222" stroke-width="1.300"><path d="M2 9v6h4l6 5V4L6 9z"/><path d="M15 8c2 2 2 6 0 8" stroke="#aaa"/></svg>
    <svg class="ml-[9px]" width="22" height="16" viewBox="0 0 22 16"><rect x="1" y="1" width="17" height="14" rx="3" fill="none" stroke="#222" stroke-width="1.500"/><rect x="3.500" y="3.500" width="6" height="9" fill="#222"/><rect x="19" y="5" width="2" height="6" fill="#222"/></svg>
    <div class="ml-auto mr-[25px] flex items-center">
      <div class="flex flex-col items-end text-[14.500px] text-[#222] leading-[20px] whitespace-nowrap">
        <span>10:11 PM</span><span>5/28/2025</span>
      </div>
      <svg class="ml-[8px]" width="20" height="26" viewBox="0 0 20 26"><path d="M10 2c-4 1-6 4-6 8v7l-2 3h16l-2-3v-7c0-4-2-7-6-8z" fill="#222"/><path d="M7 22a3 3 0 0 0 6 0" fill="#222"/></svg>
    </div>
  </div>
</div>

<script>
  // wick top, wick bottom, body top, body bottom, colour — read from the chart crops
  var first = [
    [22,668,788,760,788,'g'],[41,645,777,693,762,'g'],[61,355,695,462,695,'g'],[82,460,567,462,562,'r'],
    [100,330,567,417,562,'g'],[121,380,560,417,500,'r'],[140,396,560,498,507,'r'],[160,468,572,468,507,'g'],
    [181,445,524,468,498,'r'],[199,460,513,465,498,'g'],[220,360,488,402,467,'g'],[239,363,447,402,444,'r'],
    [259,393,480,441,477,'r'],[280,418,492,468,477,'g'],[298,255,483,276,470,'g'],[319,258,435,276,375,'r'],
    [338,325,450,372,450,'r'],[358,280,450,294,450,'g'],[379,268,398,294,357,'r'],[397,273,402,324,357,'g'],
    [418,303,423,324,362,'r'],[436,243,408,360,362,'r'],[457,155,402,318,362,'g'],[478,285,417,318,405,'r'],
    [496,297,563,402,552,'r'],[517,480,762,549,630,'r'],[535,477,638,516,630,'g'],[556,516,678,516,648,'r'],
    [577,498,657,531,648,'g'],[595,393,546,405,534,'g'],[616,378,513,405,414,'r'],[634,258,429,279,414,'g'],
    [655,261,387,279,363,'r'],[676,360,438,360,426,'r'],[694,375,447,405,426,'g'],[715,357,507,378,408,'g'],
    [733,330,513,378,435,'r'],[754,405,540,432,456,'r'],[772,411,456,432,456,'g'],[793,390,525,432,525,'r'],
    [814,495,642,522,639,'r'],[832,552,669,567,639,'g'],[853,456,684,462,570,'g'],[871,351,546,462,477,'r'],
    [892,375,525,402,477,'g'],[913,318,435,369,405,'g'],[931,351,411,369,411,'r'],[952,384,480,408,417,'r'],
    [970,339,450,351,417,'g'],[991,306,423,351,372,'r'],[1012,369,444,369,441,'r'],[1030,369,537,432,441,'g'],
    [1051,408,459,432,441,'r'],[1069,423,522,438,495,'r'],[1090,471,534,492,501,'r'],[1111,450,522,474,501,'g'],
    [1129,435,504,474,480,'r'],[1150,444,480,456,480,'g'],[1168,375,459,381,459,'g'],[1189,363,399,381,399,'r'],
    [1210,177,408,192,399,'g'],[1228,138,390,192,390,'r'],[1249,57,459,81,390,'g'],[1267,3,429,81,423,'r'],
    [1288,399,612,420,468,'r'],[1309,441,520,465,498,'r'],[1327,258,597,279,498,'g'],[1348,186,315,192,282,'g'],
    [1366,156,252,186,195,'g'],[1387,33,162,162,189,'g'],[1408,87,261,162,255,'r'],[1426,204,273,231,255,'g'],
    [1447,207,351,213,234,'g'],[1465,-10,243,12,216,'g']
  ];
  var second = [
    [106,580,712,612,636,'r'],[127,592,712,632,636,'r'],[146,498,680,633,676,'r'],[166,640,722,668,672,'g'],
    [185,315,695,381,670,'g'],[205,278,720,381,428,'r'],[223,165,530,300,430,'g'],[244,36,355,48,302,'g'],
    [265,48,203,48,138,'r'],[284,100,225,135,144,'r'],[304,67,192,107,144,'g'],[323,24,150,107,120,'r'],
    [343,55,168,57,120,'g'],[364,45,160,57,132,'r'],[382,129,210,129,176,'r'],[403,97,390,174,372,'r'],
    [421,262,578,369,387,'r'],[442,282,498,384,413,'r'],[463,411,638,411,582,'r'],[481,453,630,453,582,'g'],
    [502,432,549,453,549,'r'],[520,318,549,354,549,'g'],[541,345,432,354,390,'r'],[562,354,417,384,388,'g'],
    [580,363,558,384,528,'r'],[601,465,590,486,528,'g'],[619,462,560,486,537,'r'],[640,534,650,534,588,'r'],
    [661,585,662,585,624,'r'],[679,504,660,531,624,'g'],[700,342,594,378,534,'g'],[718,276,333,303,381,'g'],
    [739,231,333,249,306,'g'],[760,237,288,249,288,'r'],[778,210,315,258,288,'g'],[799,210,396,258,366,'r'],
    [817,273,384,327,366,'g'],[838,300,552,327,393,'r'],[859,312,432,312,393,'g'],[877,270,318,309,318,'g'],
    [898,175,417,243,312,'g'],[916,198,282,243,282,'r'],[937,270,426,273,387,'r'],[958,345,450,384,396,'r'],
    [976,366,423,393,401,'r'],[997,363,465,394,402,'g'],[1016,372,609,394,606,'r'],[1036,516,606,555,606,'g']
  ];
  var out = '';
  function draw(rows, ox, oy) {
    rows.forEach(function (c) {
      var x = ox + c[0] / 3, col = c[5] == 'g' ? '#3f9b4b' : '#e22b50';
      out += '<rect x="' + (x - 0.5) + '" y="' + (oy + c[1] / 3) + '" width="1" height="' + ((c[2] - c[1]) / 3) + '" fill="' + col + '"/>';
      out += '<rect x="' + (x - 2.5) + '" y="' + (oy + c[3] / 3) + '" width="5" height="' + Math.max(1, (c[4] - c[3]) / 3) + '" fill="' + col + '"/>';
    });
  }
  draw(first, 500, 580);
  draw(second, 960, 380);
  document.getElementById('candles').innerHTML = out;
</script>
</body>
</html>
